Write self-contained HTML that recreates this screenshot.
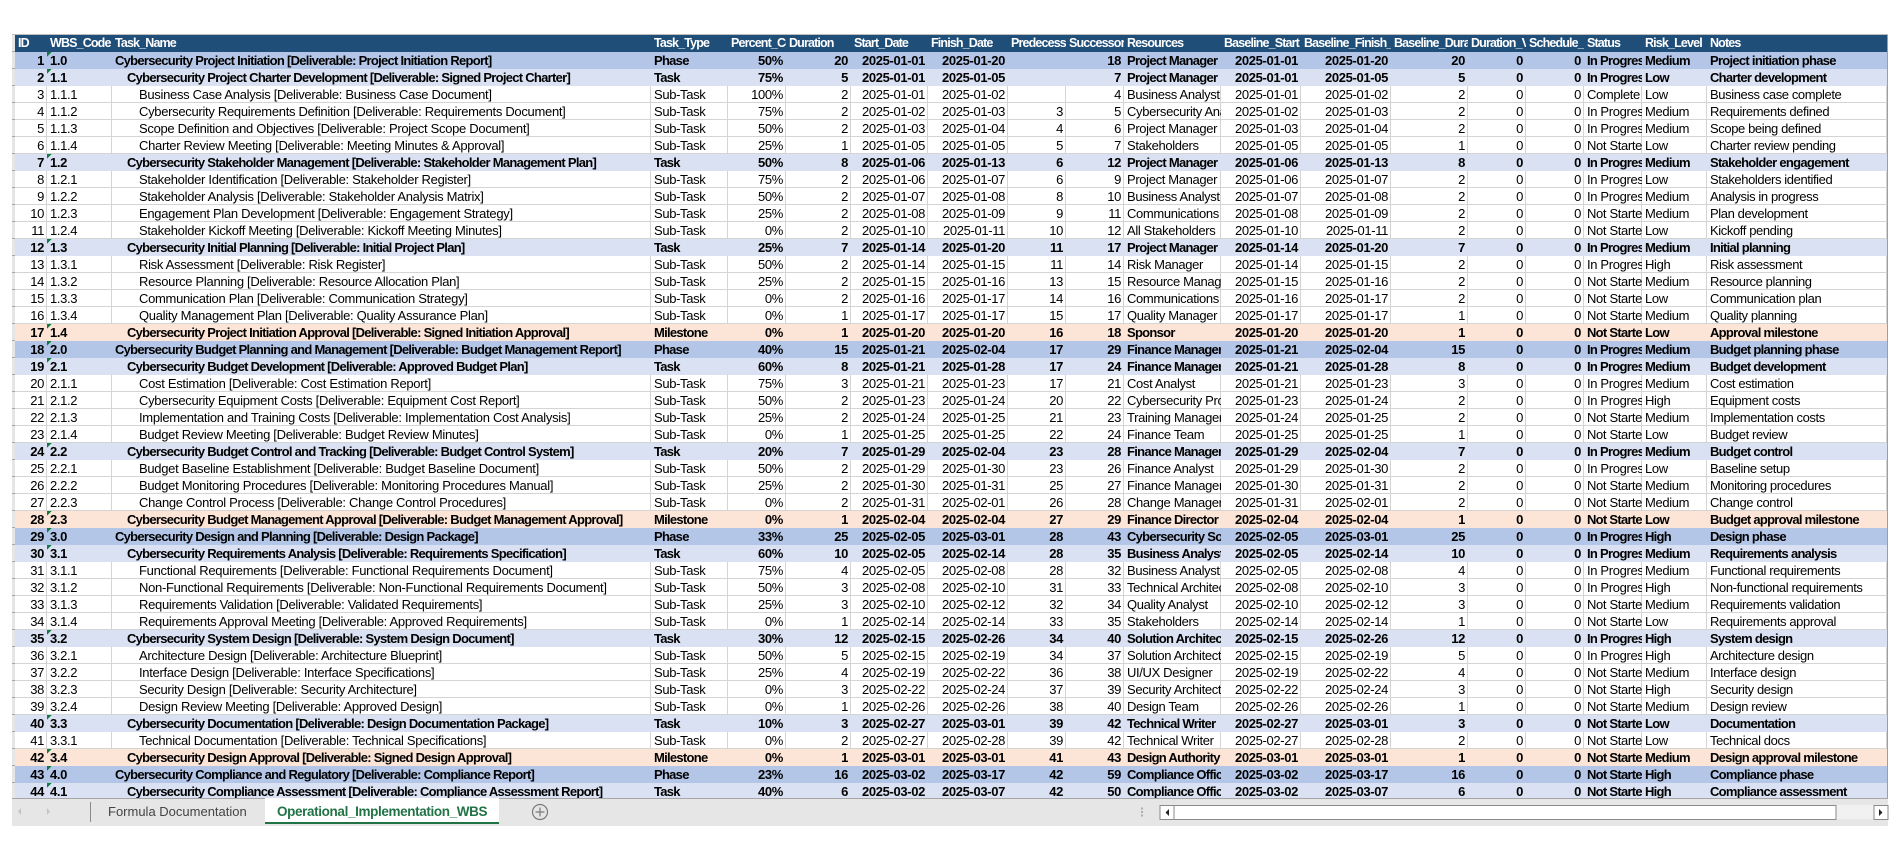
<!DOCTYPE html>
<html><head><meta charset="utf-8"><title>Operational_Implementation_WBS</title>
<style>
html,body{margin:0;padding:0;background:#fff;width:1900px;height:860px;overflow:hidden}
body{position:relative;font-family:"Liberation Sans",sans-serif;color:#000}
#top{position:absolute;left:12px;top:34px;width:1876px;height:1px;background:#bdbdbd}
#left{position:absolute;left:12px;top:35px;width:3px;height:763px;background:repeating-linear-gradient(to bottom,#e6e6e6 0 16px,#a8a8a8 16px 17px)}
#grid{position:absolute;left:15px;top:35px;width:1873px;height:763px;overflow:hidden}
table{border-collapse:separate;border-spacing:0;table-layout:fixed;width:1872px;font-size:13px;letter-spacing:-.35px}
td{height:17px;box-sizing:border-box;padding:0 3px;overflow:hidden;white-space:nowrap;line-height:17px;text-align:right;box-shadow:inset -1px -1px 0 #d4d4d4}
td:nth-child(2),td:nth-child(3),td:nth-child(4),td:nth-child(11),td:nth-child(17),td:nth-child(18),td:nth-child(19){text-align:left}
tr.s td:nth-child(3){letter-spacing:-.3px}
tr.s td:nth-child(19){letter-spacing:-.4px}
tr.h td{background:#1f4e78;color:#fff;font-weight:bold;box-shadow:none;text-align:left;font-size:12.5px;letter-spacing:-.85px}
tr.p td,tr.t td,tr.m td{font-weight:bold;box-shadow:none}
tr.p td:nth-child(3),tr.t td:nth-child(3),tr.m td:nth-child(3),tr.p td:nth-child(4),tr.t td:nth-child(4),tr.m td:nth-child(4),tr.p td:nth-child(11),tr.t td:nth-child(11),tr.m td:nth-child(11),tr.p td:nth-child(17),tr.t td:nth-child(17),tr.m td:nth-child(17),tr.p td:nth-child(18),tr.t td:nth-child(18),tr.m td:nth-child(18),tr.p td:nth-child(19),tr.t td:nth-child(19),tr.m td:nth-child(19){letter-spacing:-.72px}
tr.p td{background-color:#b4c6e7}tr.t td{background-color:#d9e1f2}tr.m td{background-color:#fce4d6}
tr.p td:nth-child(2),tr.t td:nth-child(2),tr.m td:nth-child(2){background-image:linear-gradient(135deg,#107c41 3.5px,transparent 3.5px);background-size:6px 6px;background-repeat:no-repeat}
tr.t td:nth-child(3),tr.m td:nth-child(3){padding-left:15px}
tr.s td:nth-child(3){padding-left:27px}
#right{position:absolute;left:1887px;top:35px;width:1px;height:763px;background:#9e9e9e}
#bar{position:absolute;left:12px;top:798px;width:1876px;height:28px;background:#e6e6e6;border-top:1px solid #a6a6a6;box-sizing:border-box}
#sep{position:absolute;left:90px;top:802px;width:1px;height:20px;background:#8a8a8a}
#t1{position:absolute;left:108px;top:803px;font-size:13px;line-height:17px;color:#444;white-space:nowrap}
#tab{position:absolute;left:265px;top:798px;width:234px;height:24px;background:#fff;border-bottom:2px solid #217346;box-sizing:content-box}
#t2{position:absolute;left:277px;top:803px;font-size:13.5px;line-height:17px;font-weight:bold;color:#217346;letter-spacing:-.37px;white-space:nowrap}
svg{position:absolute;left:0;top:0}
</style></head><body>
<div id="top"></div><div id="left"></div>
<div id="grid"><table>
<colgroup><col style="width:32px"><col style="width:65px"><col style="width:539px"><col style="width:77px"><col style="width:58px"><col style="width:65px"><col style="width:77px"><col style="width:80px"><col style="width:58px"><col style="width:58px"><col style="width:97px"><col style="width:80px"><col style="width:90px"><col style="width:77px"><col style="width:58px"><col style="width:58px"><col style="width:58px"><col style="width:65px"><col style="width:180px"></colgroup>
<tr class=h><td>ID<td>WBS_Code<td>Task_Name<td>Task_Type<td>Percent_Complete<td>Duration<td>Start_Date<td>Finish_Date<td>Predecessors<td>Successors<td>Resources<td>Baseline_Start<td>Baseline_Finish_Date<td>Baseline_Duration<td>Duration_Variance<td>Schedule_Variance<td>Status<td>Risk_Level<td>Notes
<tr class=p><td>1<td>1.0<td>Cybersecurity Project Initiation [Deliverable: Project Initiation Report]<td>Phase<td>50%<td>20<td>2025-01-01<td>2025-01-20<td><td>18<td>Project Manager<td>2025-01-01<td>2025-01-20<td>20<td>0<td>0<td>In Progress<td>Medium<td>Project initiation phase
<tr class=t><td>2<td>1.1<td>Cybersecurity Project Charter Development [Deliverable: Signed Project Charter]<td>Task<td>75%<td>5<td>2025-01-01<td>2025-01-05<td><td>7<td>Project Manager<td>2025-01-01<td>2025-01-05<td>5<td>0<td>0<td>In Progress<td>Low<td>Charter development
<tr class=s><td>3<td>1.1.1<td>Business Case Analysis [Deliverable: Business Case Document]<td>Sub-Task<td>100%<td>2<td>2025-01-01<td>2025-01-02<td><td>4<td>Business Analyst<td>2025-01-01<td>2025-01-02<td>2<td>0<td>0<td>Complete<td>Low<td>Business case complete
<tr class=s><td>4<td>1.1.2<td>Cybersecurity Requirements Definition [Deliverable: Requirements Document]<td>Sub-Task<td>75%<td>2<td>2025-01-02<td>2025-01-03<td>3<td>5<td>Cybersecurity Analyst<td>2025-01-02<td>2025-01-03<td>2<td>0<td>0<td>In Progress<td>Medium<td>Requirements defined
<tr class=s><td>5<td>1.1.3<td>Scope Definition and Objectives [Deliverable: Project Scope Document]<td>Sub-Task<td>50%<td>2<td>2025-01-03<td>2025-01-04<td>4<td>6<td>Project Manager<td>2025-01-03<td>2025-01-04<td>2<td>0<td>0<td>In Progress<td>Medium<td>Scope being defined
<tr class=s><td>6<td>1.1.4<td>Charter Review Meeting [Deliverable: Meeting Minutes &amp; Approval]<td>Sub-Task<td>25%<td>1<td>2025-01-05<td>2025-01-05<td>5<td>7<td>Stakeholders<td>2025-01-05<td>2025-01-05<td>1<td>0<td>0<td>Not Started<td>Low<td>Charter review pending
<tr class=t><td>7<td>1.2<td>Cybersecurity Stakeholder Management [Deliverable: Stakeholder Management Plan]<td>Task<td>50%<td>8<td>2025-01-06<td>2025-01-13<td>6<td>12<td>Project Manager<td>2025-01-06<td>2025-01-13<td>8<td>0<td>0<td>In Progress<td>Medium<td>Stakeholder engagement
<tr class=s><td>8<td>1.2.1<td>Stakeholder Identification [Deliverable: Stakeholder Register]<td>Sub-Task<td>75%<td>2<td>2025-01-06<td>2025-01-07<td>6<td>9<td>Project Manager<td>2025-01-06<td>2025-01-07<td>2<td>0<td>0<td>In Progress<td>Low<td>Stakeholders identified
<tr class=s><td>9<td>1.2.2<td>Stakeholder Analysis [Deliverable: Stakeholder Analysis Matrix]<td>Sub-Task<td>50%<td>2<td>2025-01-07<td>2025-01-08<td>8<td>10<td>Business Analyst<td>2025-01-07<td>2025-01-08<td>2<td>0<td>0<td>In Progress<td>Medium<td>Analysis in progress
<tr class=s><td>10<td>1.2.3<td>Engagement Plan Development [Deliverable: Engagement Strategy]<td>Sub-Task<td>25%<td>2<td>2025-01-08<td>2025-01-09<td>9<td>11<td>Communications Lead<td>2025-01-08<td>2025-01-09<td>2<td>0<td>0<td>Not Started<td>Medium<td>Plan development
<tr class=s><td>11<td>1.2.4<td>Stakeholder Kickoff Meeting [Deliverable: Kickoff Meeting Minutes]<td>Sub-Task<td>0%<td>2<td>2025-01-10<td>2025-01-11<td>10<td>12<td>All Stakeholders<td>2025-01-10<td>2025-01-11<td>2<td>0<td>0<td>Not Started<td>Low<td>Kickoff pending
<tr class=t><td>12<td>1.3<td>Cybersecurity Initial Planning [Deliverable: Initial Project Plan]<td>Task<td>25%<td>7<td>2025-01-14<td>2025-01-20<td>11<td>17<td>Project Manager<td>2025-01-14<td>2025-01-20<td>7<td>0<td>0<td>In Progress<td>Medium<td>Initial planning
<tr class=s><td>13<td>1.3.1<td>Risk Assessment [Deliverable: Risk Register]<td>Sub-Task<td>50%<td>2<td>2025-01-14<td>2025-01-15<td>11<td>14<td>Risk Manager<td>2025-01-14<td>2025-01-15<td>2<td>0<td>0<td>In Progress<td>High<td>Risk assessment
<tr class=s><td>14<td>1.3.2<td>Resource Planning [Deliverable: Resource Allocation Plan]<td>Sub-Task<td>25%<td>2<td>2025-01-15<td>2025-01-16<td>13<td>15<td>Resource Manager<td>2025-01-15<td>2025-01-16<td>2<td>0<td>0<td>Not Started<td>Medium<td>Resource planning
<tr class=s><td>15<td>1.3.3<td>Communication Plan [Deliverable: Communication Strategy]<td>Sub-Task<td>0%<td>2<td>2025-01-16<td>2025-01-17<td>14<td>16<td>Communications Lead<td>2025-01-16<td>2025-01-17<td>2<td>0<td>0<td>Not Started<td>Low<td>Communication plan
<tr class=s><td>16<td>1.3.4<td>Quality Management Plan [Deliverable: Quality Assurance Plan]<td>Sub-Task<td>0%<td>1<td>2025-01-17<td>2025-01-17<td>15<td>17<td>Quality Manager<td>2025-01-17<td>2025-01-17<td>1<td>0<td>0<td>Not Started<td>Medium<td>Quality planning
<tr class=m><td>17<td>1.4<td>Cybersecurity Project Initiation Approval [Deliverable: Signed Initiation Approval]<td>Milestone<td>0%<td>1<td>2025-01-20<td>2025-01-20<td>16<td>18<td>Sponsor<td>2025-01-20<td>2025-01-20<td>1<td>0<td>0<td>Not Started<td>Low<td>Approval milestone
<tr class=p><td>18<td>2.0<td>Cybersecurity Budget Planning and Management [Deliverable: Budget Management Report]<td>Phase<td>40%<td>15<td>2025-01-21<td>2025-02-04<td>17<td>29<td>Finance Manager<td>2025-01-21<td>2025-02-04<td>15<td>0<td>0<td>In Progress<td>Medium<td>Budget planning phase
<tr class=t><td>19<td>2.1<td>Cybersecurity Budget Development [Deliverable: Approved Budget Plan]<td>Task<td>60%<td>8<td>2025-01-21<td>2025-01-28<td>17<td>24<td>Finance Manager<td>2025-01-21<td>2025-01-28<td>8<td>0<td>0<td>In Progress<td>Medium<td>Budget development
<tr class=s><td>20<td>2.1.1<td>Cost Estimation [Deliverable: Cost Estimation Report]<td>Sub-Task<td>75%<td>3<td>2025-01-21<td>2025-01-23<td>17<td>21<td>Cost Analyst<td>2025-01-21<td>2025-01-23<td>3<td>0<td>0<td>In Progress<td>Medium<td>Cost estimation
<tr class=s><td>21<td>2.1.2<td>Cybersecurity Equipment Costs [Deliverable: Equipment Cost Report]<td>Sub-Task<td>50%<td>2<td>2025-01-23<td>2025-01-24<td>20<td>22<td>Cybersecurity Procurement<td>2025-01-23<td>2025-01-24<td>2<td>0<td>0<td>In Progress<td>High<td>Equipment costs
<tr class=s><td>22<td>2.1.3<td>Implementation and Training Costs [Deliverable: Implementation Cost Analysis]<td>Sub-Task<td>25%<td>2<td>2025-01-24<td>2025-01-25<td>21<td>23<td>Training Manager<td>2025-01-24<td>2025-01-25<td>2<td>0<td>0<td>Not Started<td>Medium<td>Implementation costs
<tr class=s><td>23<td>2.1.4<td>Budget Review Meeting [Deliverable: Budget Review Minutes]<td>Sub-Task<td>0%<td>1<td>2025-01-25<td>2025-01-25<td>22<td>24<td>Finance Team<td>2025-01-25<td>2025-01-25<td>1<td>0<td>0<td>Not Started<td>Low<td>Budget review
<tr class=t><td>24<td>2.2<td>Cybersecurity Budget Control and Tracking [Deliverable: Budget Control System]<td>Task<td>20%<td>7<td>2025-01-29<td>2025-02-04<td>23<td>28<td>Finance Manager<td>2025-01-29<td>2025-02-04<td>7<td>0<td>0<td>In Progress<td>Medium<td>Budget control
<tr class=s><td>25<td>2.2.1<td>Budget Baseline Establishment [Deliverable: Budget Baseline Document]<td>Sub-Task<td>50%<td>2<td>2025-01-29<td>2025-01-30<td>23<td>26<td>Finance Analyst<td>2025-01-29<td>2025-01-30<td>2<td>0<td>0<td>In Progress<td>Low<td>Baseline setup
<tr class=s><td>26<td>2.2.2<td>Budget Monitoring Procedures [Deliverable: Monitoring Procedures Manual]<td>Sub-Task<td>25%<td>2<td>2025-01-30<td>2025-01-31<td>25<td>27<td>Finance Manager<td>2025-01-30<td>2025-01-31<td>2<td>0<td>0<td>Not Started<td>Medium<td>Monitoring procedures
<tr class=s><td>27<td>2.2.3<td>Change Control Process [Deliverable: Change Control Procedures]<td>Sub-Task<td>0%<td>2<td>2025-01-31<td>2025-02-01<td>26<td>28<td>Change Manager<td>2025-01-31<td>2025-02-01<td>2<td>0<td>0<td>Not Started<td>Medium<td>Change control
<tr class=m><td>28<td>2.3<td>Cybersecurity Budget Management Approval [Deliverable: Budget Management Approval]<td>Milestone<td>0%<td>1<td>2025-02-04<td>2025-02-04<td>27<td>29<td>Finance Director<td>2025-02-04<td>2025-02-04<td>1<td>0<td>0<td>Not Started<td>Low<td>Budget approval milestone
<tr class=p><td>29<td>3.0<td>Cybersecurity Design and Planning [Deliverable: Design Package]<td>Phase<td>33%<td>25<td>2025-02-05<td>2025-03-01<td>28<td>43<td>Cybersecurity Solution<td>2025-02-05<td>2025-03-01<td>25<td>0<td>0<td>In Progress<td>High<td>Design phase
<tr class=t><td>30<td>3.1<td>Cybersecurity Requirements Analysis [Deliverable: Requirements Specification]<td>Task<td>60%<td>10<td>2025-02-05<td>2025-02-14<td>28<td>35<td>Business Analyst<td>2025-02-05<td>2025-02-14<td>10<td>0<td>0<td>In Progress<td>Medium<td>Requirements analysis
<tr class=s><td>31<td>3.1.1<td>Functional Requirements [Deliverable: Functional Requirements Document]<td>Sub-Task<td>75%<td>4<td>2025-02-05<td>2025-02-08<td>28<td>32<td>Business Analyst<td>2025-02-05<td>2025-02-08<td>4<td>0<td>0<td>In Progress<td>Medium<td>Functional requirements
<tr class=s><td>32<td>3.1.2<td>Non-Functional Requirements [Deliverable: Non-Functional Requirements Document]<td>Sub-Task<td>50%<td>3<td>2025-02-08<td>2025-02-10<td>31<td>33<td>Technical Architect<td>2025-02-08<td>2025-02-10<td>3<td>0<td>0<td>In Progress<td>High<td>Non-functional requirements
<tr class=s><td>33<td>3.1.3<td>Requirements Validation [Deliverable: Validated Requirements]<td>Sub-Task<td>25%<td>3<td>2025-02-10<td>2025-02-12<td>32<td>34<td>Quality Analyst<td>2025-02-10<td>2025-02-12<td>3<td>0<td>0<td>Not Started<td>Medium<td>Requirements validation
<tr class=s><td>34<td>3.1.4<td>Requirements Approval Meeting [Deliverable: Approved Requirements]<td>Sub-Task<td>0%<td>1<td>2025-02-14<td>2025-02-14<td>33<td>35<td>Stakeholders<td>2025-02-14<td>2025-02-14<td>1<td>0<td>0<td>Not Started<td>Low<td>Requirements approval
<tr class=t><td>35<td>3.2<td>Cybersecurity System Design [Deliverable: System Design Document]<td>Task<td>30%<td>12<td>2025-02-15<td>2025-02-26<td>34<td>40<td>Solution Architect<td>2025-02-15<td>2025-02-26<td>12<td>0<td>0<td>In Progress<td>High<td>System design
<tr class=s><td>36<td>3.2.1<td>Architecture Design [Deliverable: Architecture Blueprint]<td>Sub-Task<td>50%<td>5<td>2025-02-15<td>2025-02-19<td>34<td>37<td>Solution Architect<td>2025-02-15<td>2025-02-19<td>5<td>0<td>0<td>In Progress<td>High<td>Architecture design
<tr class=s><td>37<td>3.2.2<td>Interface Design [Deliverable: Interface Specifications]<td>Sub-Task<td>25%<td>4<td>2025-02-19<td>2025-02-22<td>36<td>38<td>UI/UX Designer<td>2025-02-19<td>2025-02-22<td>4<td>0<td>0<td>Not Started<td>Medium<td>Interface design
<tr class=s><td>38<td>3.2.3<td>Security Design [Deliverable: Security Architecture]<td>Sub-Task<td>0%<td>3<td>2025-02-22<td>2025-02-24<td>37<td>39<td>Security Architect<td>2025-02-22<td>2025-02-24<td>3<td>0<td>0<td>Not Started<td>High<td>Security design
<tr class=s><td>39<td>3.2.4<td>Design Review Meeting [Deliverable: Approved Design]<td>Sub-Task<td>0%<td>1<td>2025-02-26<td>2025-02-26<td>38<td>40<td>Design Team<td>2025-02-26<td>2025-02-26<td>1<td>0<td>0<td>Not Started<td>Medium<td>Design review
<tr class=t><td>40<td>3.3<td>Cybersecurity Documentation [Deliverable: Design Documentation Package]<td>Task<td>10%<td>3<td>2025-02-27<td>2025-03-01<td>39<td>42<td>Technical Writer<td>2025-02-27<td>2025-03-01<td>3<td>0<td>0<td>Not Started<td>Low<td>Documentation
<tr class=s><td>41<td>3.3.1<td>Technical Documentation [Deliverable: Technical Specifications]<td>Sub-Task<td>0%<td>2<td>2025-02-27<td>2025-02-28<td>39<td>42<td>Technical Writer<td>2025-02-27<td>2025-02-28<td>2<td>0<td>0<td>Not Started<td>Low<td>Technical docs
<tr class=m><td>42<td>3.4<td>Cybersecurity Design Approval [Deliverable: Signed Design Approval]<td>Milestone<td>0%<td>1<td>2025-03-01<td>2025-03-01<td>41<td>43<td>Design Authority<td>2025-03-01<td>2025-03-01<td>1<td>0<td>0<td>Not Started<td>Medium<td>Design approval milestone
<tr class=p><td>43<td>4.0<td>Cybersecurity Compliance and Regulatory [Deliverable: Compliance Report]<td>Phase<td>23%<td>16<td>2025-03-02<td>2025-03-17<td>42<td>59<td>Compliance Officer<td>2025-03-02<td>2025-03-17<td>16<td>0<td>0<td>Not Started<td>High<td>Compliance phase
<tr class=t><td>44<td>4.1<td>Cybersecurity Compliance Assessment [Deliverable: Compliance Assessment Report]<td>Task<td>40%<td>6<td>2025-03-02<td>2025-03-07<td>42<td>50<td>Compliance Officer<td>2025-03-02<td>2025-03-07<td>6<td>0<td>0<td>Not Started<td>High<td>Compliance assessment
</table></div>
<div id="right"></div>
<div id="bar"></div>
<div id="sep"></div>
<div id="t1">Formula Documentation</div>
<div id="tab"></div>
<div id="t2">Operational_Implementation_WBS</div>
<svg width="1900" height="860">
<path d="M21 808v7l-3-3.500z" fill="#c4c4c4"/>
<path d="M47 808v7l3-3.500z" fill="#c4c4c4"/>
<circle cx="540" cy="812" r="7.500" fill="none" stroke="#7a7a7a" stroke-width="1.200"/>
<path d="M540 807.500v9M535.500 812h9" stroke="#7a7a7a" stroke-width="1.200" fill="none"/>
<path d="M1142 807.500v2M1142 811v2M1142 814.500v2" stroke="#9a9a9a" stroke-width="1.500" fill="none"/>
<rect x="1836" y="805" width="52" height="14" fill="#f1f1f1"/>
<rect x="1160" y="805.500" width="676" height="14" fill="#fff" stroke="#8a8a8a"/>
<rect x="1160" y="805.500" width="14" height="14" fill="#fff" stroke="#8a8a8a"/>
<rect x="1874" y="805.500" width="14" height="14" fill="#fff" stroke="#8a8a8a"/>
<path d="M1169 809v7l-3.500-3.500z" fill="#222"/>
<path d="M1879 809v7l3.500-3.500z" fill="#222"/>
</svg>
</body></html>
